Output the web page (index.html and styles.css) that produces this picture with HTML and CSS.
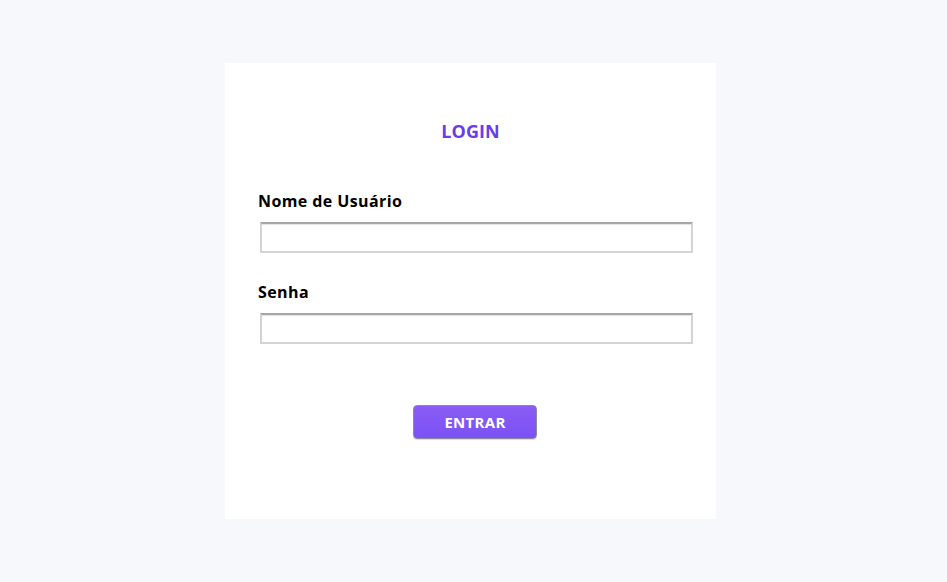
FILE: index.html
```html
<!DOCTYPE html>
<html lang="pt">
<head>
<meta charset="utf-8">
<title>Login</title>
<link rel="stylesheet" href="styles.css">
</head>
<body>
<main class="page">
  <form class="card">
    <h1 class="title">LOGIN</h1>
    <label class="field">
      <span class="label">Nome de Usuário</span>
      <input class="input" type="text">
    </label>
    <label class="field">
      <span class="label">Senha</span>
      <input class="input" type="password">
    </label>
    <div class="actions">
      <button class="btn" type="button">ENTRAR</button>
    </div>
  </form>
</main>
</body>
</html>
```
FILE: styles.css
```css
* { box-sizing: border-box; }
html, body { margin: 0; height: 100%; }
body {
  background: #f7f8fb;
  font-family: "Open Sans", "Noto Sans", "Liberation Sans", sans-serif;
  color: #000;
}
.page {
  display: flex;
  justify-content: center;
  padding-top: 63px;
  padding-right: 6px;
}
.card {
  width: 491px;
  height: 456px;
  background: #fff;
  padding: 0 23px 0 34px;
  display: flex;
  flex-direction: column;
}
.title {
  margin: 0 -23px 0 -34px;
  padding-top: 56px;
  height: 118px;
  text-align: center;
  font-size: 18px;
  font-weight: 700;
  color: #6a3de8;
  line-height: 25px;
  letter-spacing: 0.1px;
}
.field {
  display: flex;
  flex-direction: column;
}
.label {
  font-size: 16px;
  font-weight: 700;
  line-height: 22px;
  margin-left: -1px;
  height: 41px;
  padding-top: 9px;
  letter-spacing: 0.4px;
}
.field + .field .label { padding-top: 28px; height: 60px; }
.input {
  margin: 0 0 0 1px;
  width: 433px;
  height: 31px;
  border: 2px solid #d4d4d4;
  border-top-color: #a6a6a6;
  box-shadow: inset 0 1px 1px rgba(0,0,0,0.12);
  background: #fff;
  font: inherit;
}
.actions {
  display: flex;
  justify-content: center;
  padding-top: 61px;
  padding-right: 2px;
}
.btn {
  width: 124px;
  height: 34px;
  border: 1px solid #8f889f;
  border-radius: 4px;
  background: linear-gradient(180deg, #8b5cf6 0%, #7a52f4 100%);
  color: #fff;
  font: inherit;
  font-size: 15px;
  font-weight: 700;
  letter-spacing: 0.3px;
  box-shadow: 0 1px 1px rgba(0,0,0,0.15);
}
```
